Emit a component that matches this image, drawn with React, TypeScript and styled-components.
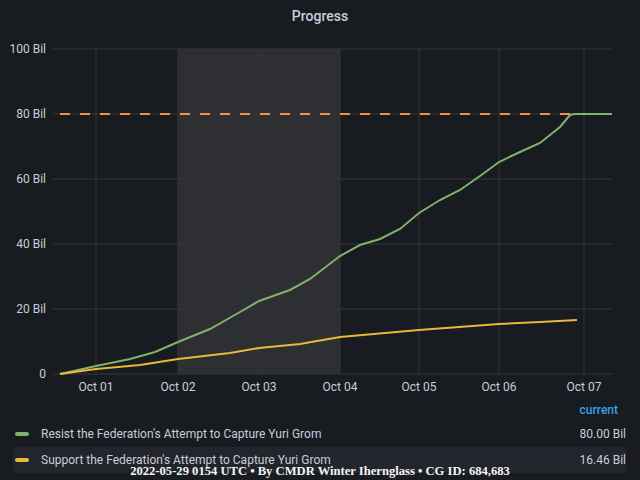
import React from 'react';
import styled, { createGlobalStyle } from 'styled-components';

const Global = createGlobalStyle`
  body { margin: 0; background: #181b1f; font-family: Roboto, "Liberation Sans", sans-serif; }
`;

const Panel = styled.div`
  position: relative;
  width: 640px;
  height: 480px;
  background: #181b1f;
  color: #ccccdc;
  overflow: hidden;
  display: flex;
  flex-direction: column;
`;

const Title = styled.div`
  height: 32px;
  display: flex;
  align-items: center;
  justify-content: center;
  font-size: 14px;
  font-weight: 500;
`;

const Legend = styled.div`
  display: flex;
  flex-direction: column;
  padding: 0 14px 0 13px;
`;

const LegendHead = styled.div`
  text-align: right;
  color: #33a2e5;
  font-size: 12px;
  font-weight: 500;
  height: 20px;
  line-height: 20px;
  padding-right: 8px;
  margin-bottom: 1px;
`;

const Row = styled.div<{ alt?: boolean }>`
  display: flex;
  align-items: center;
  height: 26px;
  font-size: 12px;
  background: ${p => (p.alt ? '#22252b' : 'transparent')};
`;

const Swatch = styled.span<{ color: string }>`
  width: 14px;
  height: 4px;
  border-radius: 2px;
  background: ${p => p.color};
  margin: 0 12px 0 2px;
`;

const Name = styled.span`
  flex: 1;
`;

const Footer = styled.div`
  position: absolute;
  left: 0;
  right: 0;
  bottom: 1px;
  text-align: center;
  font-family: "Liberation Serif", serif;
  font-weight: bold;
  font-size: 12.6px;
  color: #f4f4f4;
`;

const green = [[60,374],[96,366],[130,359],[155,352],[178,342],[210,329],[240,312],[259,301],[290,290],[310,279],[340,256],[360,245],[380,239],[400,229],[419,213],[440,200],[460,190],[480,176],[499,162],[520,152],[540,143],[560,127],[570,115],[575,114],[612,114]];
const yellow = [[60,374],[96,369],[140,365],[178,359],[230,353],[259,348],[300,344],[340,337],[419,330],[499,324],[540,322],[577,320]];
const pts = (a: number[][]) => a.map(p => p.join(',')).join(' ');

const xs = [96, 178, 259, 340, 419, 499, 584];
const days = ['Oct 01', 'Oct 02', 'Oct 03', 'Oct 04', 'Oct 05', 'Oct 06', 'Oct 07'];
const ys = [[49, '100 Bil'], [114, '80 Bil'], [179, '60 Bil'], [244, '40 Bil'], [309, '20 Bil'], [374, '0']] as const;

const Chart = () => (
  <svg width="640" height="368" viewBox="0 32 640 368" style={{ display: 'block' }}>
    <rect x="178" y="49" width="162" height="325" fill="#2d2f33" />
    {ys.map(([y, l]) => (
      <g key={l}>
        <line x1="53" x2="612" y1={y} y2={y} stroke="#34373c" />
        <text x="46" y={y + 4} textAnchor="end" fontSize="12" fill="#ccccdc">{l}</text>
      </g>
    ))}
    {xs.map((x, i) => (
      <g key={x}>
        <line x1={x} x2={x} y1="49" y2="374" stroke="#34373c" />
        <text x={x} y="391" textAnchor="middle" fontSize="12" fill="#ccccdc">{days[i]}</text>
      </g>
    ))}
    <line x1="60" x2="612" y1="114" y2="114" stroke="#f2914a" strokeWidth="2" strokeDasharray="10 10" />
    <polyline points={pts(green)} fill="none" stroke="#7eb26d" strokeWidth="2" />
    <polyline points={pts(yellow)} fill="none" stroke="#eab839" strokeWidth="2" />
  </svg>
);

export default function App() {
  return (
    <Panel>
      <Global />
      <Title>Progress</Title>
      <Chart />
      <Legend>
        <LegendHead>current</LegendHead>
        <Row>
          <Swatch color="#7eb26d" />
          <Name>Resist the Federation's Attempt to Capture Yuri Grom</Name>
          <span>80.00 Bil</span>
        </Row>
        <Row alt>
          <Swatch color="#eab839" />
          <Name>Support the Federation's Attempt to Capture Yuri Grom</Name>
          <span>16.46 Bil</span>
        </Row>
      </Legend>
      <Footer>2022-05-29 0154 UTC • By CMDR Winter Ihernglass • CG ID: 684,683</Footer>
    </Panel>
  );
}
